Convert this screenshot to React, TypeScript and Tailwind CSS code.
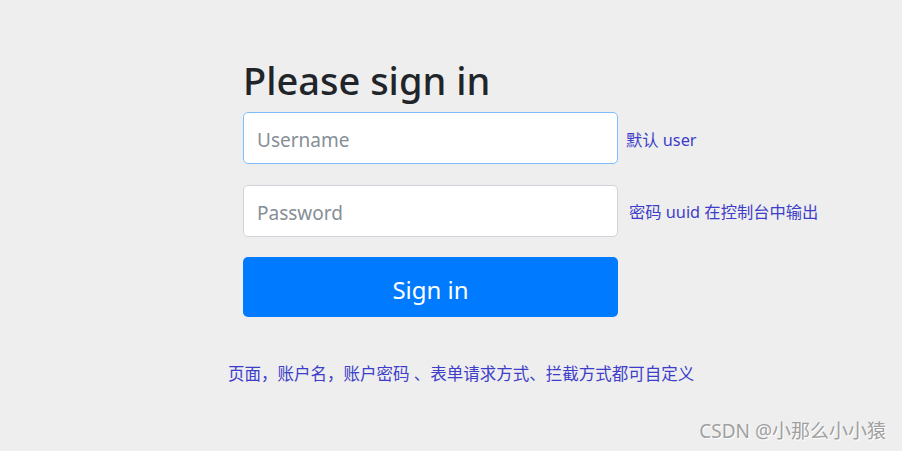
import React from 'react';

const cjk = { fontFamily: '"Noto Sans", "Noto Sans CJK SC", sans-serif' };

export default function App() {
  return (
    <div className="relative h-[451px] w-[902px] overflow-hidden bg-[#eeeeee]" style={cjk}>
      <div className="pt-[55px] pl-[243px]">
        <h2 className="mb-[7px] text-[38px] font-medium leading-[50px] text-[#212529]">Please sign in</h2>

        <div className="flex items-center">
          <input
            type="text"
            placeholder="Username"
            className="h-[52px] w-[375px] rounded-[5px] border border-[#80bdff] bg-white px-[13px] pt-[4px] text-[19px] text-[#495057] outline-none placeholder:text-[#868e96]"
          />
          <span className="ml-[8px] mt-[4px] text-[16.3px] text-[#3d3dc9]">默认 user</span>
        </div>

        <div className="mt-[21px] flex items-center">
          <input
            type="password"
            placeholder="Password"
            className="h-[52px] w-[375px] rounded-[5px] border border-[#ced4da] bg-white px-[13px] pt-[4px] text-[19px] text-[#495057] outline-none placeholder:text-[#868e96]"
          />
          <span className="ml-[11px] mt-[2px] text-[16.3px] text-[#3d3dc9]">密码 uuid 在控制台中输出</span>
        </div>

        <button
          type="button"
          className="mt-[20px] flex h-[60px] w-[375px] items-center justify-center rounded-[5px] bg-[#007bff] pt-[5px] text-[24px] text-white"
        >
          Sign in
        </button>
      </div>

      <p className="mt-[45px] pl-[228px] text-[16.5px] leading-[24px] text-[#3d3dc9]">
        页面，账户名，账户密码 、表单请求方式、拦截方式都可自定义
      </p>

      <div className="absolute bottom-[6px] right-[16px] text-[19px] text-[#a0a0a0] [text-shadow:1px_1px_0_#ffffff]">
        CSDN @小那么小小猿
      </div>
    </div>
  );
}
